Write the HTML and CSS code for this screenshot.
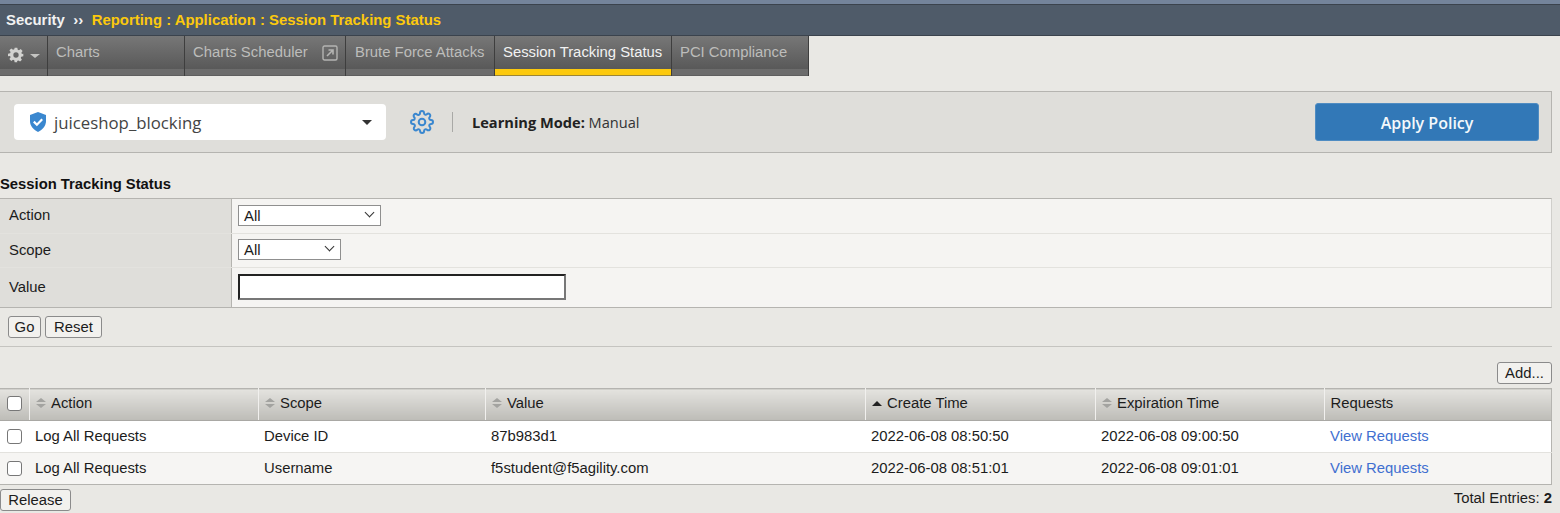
FILE: index.html
```html
<!DOCTYPE html>
<html lang="en">
<head>
  <meta charset="UTF-8" />
  <title>Session Tracking Status</title>
  <link rel="stylesheet" href="styles.css">
</head>
<body>
  <div class="top-strip"></div>
  <div class="title-bar">
    <span class="crumb-root">Security</span>
    <span class="crumb-sep">››</span>
    <span class="crumb-path">Reporting : Application : Session Tracking Status</span>
  </div>

  <div class="tabs">
    <div class="tab tab-gear">
      <svg class="gear-solid" viewBox="0 0 24 24" width="16" height="16">
        <path fill="#d2d2d0" fill-rule="evenodd" d="M10 1h4l.6 3.1 1.9.8 2.6-1.8 2.8 2.8-1.8 2.6.8 1.9L23 10v4l-3.1.6-.8 1.9 1.8 2.6-2.8 2.8-2.6-1.8-1.9.8L13.900 23h-4l-.5-3.100-1.900-.8-2.600 1.800-2.800-2.800 1.800-2.600-.8-1.900L0 14v-4l3.100-.5.8-1.900-1.800-2.600 2.800-2.800 2.600 1.800 1.900-.8zM12 8a4 4 0 1 0 0 8 4 4 0 0 0 0-8z"/>
      </svg>
      <span class="caret-small"></span>
    </div>
    <div class="tab tab-charts">Charts</div>
    <div class="tab tab-scheduler">
      <span>Charts Scheduler</span>
      <svg class="popout" viewBox="0 0 16 16" width="16" height="16">
        <rect x="1" y="1" width="14" height="14" rx="1.500" fill="none" stroke="#b4b4b2" stroke-width="1.400"/>
        <path d="M5 11l5.500-5.500M6.500 5h4.500v4.500" fill="none" stroke="#b4b4b2" stroke-width="1.600"/>
      </svg>
    </div>
    <div class="tab tab-brute">Brute Force Attacks</div>
    <div class="tab tab-session active">Session Tracking Status</div>
    <div class="tab tab-pci">PCI Compliance</div>
  </div>

  <div class="policy-bar">
    <div class="policy-select">
      <svg class="shield" viewBox="0 0 18 20" width="18" height="20">
        <path fill="#3a87cf" d="M9 0l8 3v6c0 5-3.400 8.800-8 11-4.600-2.200-8-6-8-11V3z"/>
        <path fill="none" stroke="#fff" stroke-width="2.200" d="M4.800 9.600l3.100 3.100 5.300-5.400"/>
      </svg>
      <span class="policy-name">juiceshop_blocking</span>
      <span class="caret"></span>
    </div>
    <svg class="gear-line" viewBox="0 0 24 24" width="24" height="24" fill="none" stroke="#3a87cf" stroke-width="2">
      <circle cx="12" cy="12" r="3.300"/>
      <path d="M19.400 15a1.650 1.650 0 0 0 .33 1.820l.06.06a2 2 0 1 1-2.830 2.830l-.06-.06a1.650 1.650 0 0 0-2.800 1.170V21a2 2 0 0 1-4 0v-.09a1.650 1.650 0 0 0-2.800-1.170l-.06.06a2 2 0 1 1-2.830-2.830l.06-.06a1.650 1.650 0 0 0-1.170-2.800H3a2 2 0 0 1 0-4h.09a1.650 1.650 0 0 0 1.170-2.800l-.06-.06a2 2 0 1 1 2.830-2.830l.06.06a1.650 1.650 0 0 0 1.820.33H9a1.650 1.650 0 0 0 1-1.510V3a2 2 0 0 1 4 0v.09a1.650 1.650 0 0 0 2.800 1.170l.06-.06a2 2 0 1 1 2.830 2.830l-.06.06a1.650 1.650 0 0 0 1.170 2.800H21a2 2 0 0 1 0 4h-.09a1.650 1.650 0 0 0-1.510 1z"/>
    </svg>
    <span class="divider"></span>
    <span class="learning"><b>Learning Mode:</b> Manual</span>
    <button class="apply-btn">Apply Policy</button>
  </div>

  <h2 class="section-title">Session Tracking Status</h2>

  <div class="filter">
    <div class="filter-row row-action">
      <div class="filter-label">Action</div>
      <div class="filter-field"><div class="fake-select select-action">All<span class="chevron"></span></div></div>
    </div>
    <div class="filter-row row-scope">
      <div class="filter-label">Scope</div>
      <div class="filter-field"><div class="fake-select select-scope">All<span class="chevron"></span></div></div>
    </div>
    <div class="filter-row row-value">
      <div class="filter-label">Value</div>
      <div class="filter-field"><div class="value-input"></div></div>
    </div>
  </div>
  <div class="filter-buttons">
    <button class="btn btn-go">Go</button>
    <button class="btn btn-reset">Reset</button>
  </div>

  <div class="add-row"><button class="btn btn-add">Add...</button></div>

  <table class="grid">
    <colgroup>
      <col class="col-check"><col class="col-action"><col class="col-scope"><col class="col-value">
      <col class="col-create"><col class="col-expire"><col class="col-req">
    </colgroup>
    <thead>
      <tr>
        <th><span class="check"></span></th>
        <th><span class="sort"></span>Action</th>
        <th><span class="sort"></span>Scope</th>
        <th><span class="sort"></span>Value</th>
        <th><span class="sort-up"></span>Create Time</th>
        <th><span class="sort"></span>Expiration Time</th>
        <th>Requests</th>
      </tr>
    </thead>
    <tbody>
      <tr>
        <td><span class="check"></span></td>
        <td>Log All Requests</td>
        <td>Device ID</td>
        <td>87b983d1</td>
        <td>2022-06-08 08:50:50</td>
        <td>2022-06-08 09:00:50</td>
        <td><a href="#">View Requests</a></td>
      </tr>
      <tr>
        <td><span class="check"></span></td>
        <td>Log All Requests</td>
        <td>Username</td>
        <td>f5student@f5agility.com</td>
        <td>2022-06-08 08:51:01</td>
        <td>2022-06-08 09:01:01</td>
        <td><a href="#">View Requests</a></td>
      </tr>
    </tbody>
  </table>

  <div class="footer-row">
    <button class="btn btn-release">Release</button>
    <span class="total">Total Entries: <b>2</b></span>
  </div>
</body>
</html>
```

FILE: styles.css
```css
* {
  box-sizing: border-box;
}

html, body {
  height: 513px;
  overflow: hidden;
}

body {
  margin: 0;
  background: #e9e8e4;
  color: #1c1c1c;
  font-family: "Liberation Sans", Arial, sans-serif;
  font-size: 14.85px;
}

.top-strip {
  height: 4px;
  background: #74849b;
}

.title-bar {
  height: 32px;
  padding-left: 6px;
  display: flex;
  align-items: center;
  background: #4f5b69;
  border-top: 1px solid #3b434d;
  border-bottom: 1px solid #3b434d;
  font-size: 14.9px;
  font-weight: bold;
}

.crumb-root {
  color: #f2f2f2;
}

.crumb-sep {
  margin: 0 8.5px;
  color: #f2f2f2;
}

.crumb-path {
  color: #fcc90d;
}

/* tabs */
.tabs {
  display: flex;
  width: 809px;
  height: 40px;
}

.tab {
  display: flex;
  align-items: flex-start;
  padding: 8px 8px 0;
  background: linear-gradient(#777, #595959 82%, #6c6c6c 82%, #6c6c6c 97%, #555);
  border-right: 1px solid #3e3e3e;
  color: #bdbdbb;
  white-space: nowrap;
}

.tab-gear { width: 48px; padding-top: 11px; }
.tab-charts { width: 137px; }
.tab-scheduler { width: 161px; justify-content: space-between; padding-right: 7px; }
.tab-brute { width: 149px; padding-left: 9px; }
.tab-session { width: 177px; }
.tab-pci { width: 137px; }

.tab.active {
  color: #f2f2f2;
  background: linear-gradient(#777, #595959 82%, #fcc90d 82%, #fcc90d 97%, #555);
}

.gear-solid {
  flex: none;
}

.popout {
  margin-top: 1px;
}

.caret-small {
  margin: 7px 0 0 6px;
  border: 5px solid transparent;
  border-top: 4px solid #c4c4c2;
  border-bottom: 0;
}

/* policy bar */
.policy-bar {
  width: 1552px;
  height: 62px;
  margin-top: 15px;
  padding-left: 14px;
  display: flex;
  align-items: center;
  background: #dfdeda;
  border: 1px solid #b5b4b0;
  border-left: 0;
  font-family: "Open Sans", sans-serif;
}

.policy-select {
  width: 372px;
  height: 36px;
  padding: 0 14px 0 15px;
  display: flex;
  align-items: center;
  background: #fff;
  border-radius: 4px;
}

.shield {
  margin-right: 7px;
}

.policy-name {
  flex: 1;
  color: #444;
  font-size: 16.8px;
}

.caret {
  border: 5px solid transparent;
  border-top: 5px solid #333;
  border-bottom: 0;
}

.gear-line {
  margin-left: 24px;
}

.divider {
  width: 1px;
  height: 20px;
  margin: 0 19px 0 18px;
  background: #a9a9a6;
}

.learning {
  font-size: 14.6px;
  color: #333;
}

.learning b {
  color: #222;
}

.apply-btn {
  width: 224px;
  height: 38px;
  margin-left: auto;
  margin-right: 12px;
  padding-top: 2px;
  background: #3278b7;
  border: 1px solid #4f8cc2;
  border-radius: 3px;
  color: #f4f8fb;
  font-family: "Open Sans", sans-serif;
  font-size: 16px;
  font-weight: 600;
}

.section-title {
  margin: 23px 0 5px;
  font-size: 14.8px;
  line-height: 17px;
  color: #111;
}

/* filter */
.filter {
  width: 1552px;
  border-top: 1px solid #b5b4b0;
  border-bottom: 1px solid #b5b4b0;
  border-right: 1px solid #d0cfcb;
}

.filter-row {
  display: flex;
  border-bottom: 1px solid #e3e2de;
}

.filter-row:last-child {
  border-bottom: 0;
}

.row-action { height: 35px; }
.row-scope { height: 34px; }
.row-value { height: 39px; }

.filter-label {
  width: 232px;
  padding: 0 0 2px 9px;
  display: flex;
  align-items: center;
  background: #dfdeda;
  border-right: 1px solid #b5b4b0;
}

.filter-field {
  flex: 1;
  padding: 0 0 2px 6px;
  display: flex;
  align-items: center;
  background: #f5f4f2;
}

.fake-select {
  height: 21px;
  padding-left: 5px;
  position: relative;
  background: #fff;
  border: 1px solid #8f8f8f;
  line-height: 20px;
}

.select-action { width: 143px; }
.select-scope { width: 103px; }

.chevron {
  position: absolute;
  right: 7px;
  top: 3px;
  width: 7px;
  height: 7px;
  border-right: 1px solid #333;
  border-bottom: 1px solid #333;
  transform: rotate(45deg);
}

.value-input {
  width: 328px;
  height: 26px;
  background: #fff;
  border: 2px solid #222;
  border-right-color: #777;
  border-bottom-color: #777;
}

.filter-buttons {
  width: 1552px;
  height: 39px;
  padding-left: 8px;
  display: flex;
  align-items: center;
  gap: 4px;
  border-bottom: 1px solid #c5c4c0;
}

.btn {
  height: 22px;
  padding: 0;
  background: #f2f1ee;
  border: 1px solid #8b8b8b;
  border-radius: 3px;
  color: #1c1c1c;
  font-family: "Liberation Sans", Arial, sans-serif;
  font-size: 14.85px;
}

.btn-go { width: 33px; }
.btn-reset { width: 57px; }
.btn-add { width: 55px; }
.btn-release { width: 71px; }

.add-row {
  width: 1552px;
  margin-top: 15px;
  display: flex;
  justify-content: flex-end;
}

/* grid */
.grid {
  width: 1552px;
  margin-top: 4px;
  border-collapse: collapse;
  table-layout: fixed;
  border: 1px solid #b5b4b0;
  border-left: 0;
}

.col-check { width: 29px; }
.col-action { width: 229px; }
.col-scope { width: 227px; }
.col-value { width: 380px; }
.col-create { width: 230px; }
.col-expire { width: 229px; }

.grid th {
  height: 32px;
  padding: 0 0 3px 6px;
  background: linear-gradient(#e4e3df, #bdbcb7);
  border-left: 1px solid #f1f0ee;
  border-bottom: 1px solid #a9a8a4;
  font-weight: normal;
  text-align: left;
}

.grid th:first-child {
  border-left: 0;
}

.grid td {
  height: 32px;
  padding: 0 0 1px 6px;
  background: #f6f5f3;
  border-top: 1px solid #e3e2de;
}

.grid tbody tr:first-child td {
  background: #fff;
  border-top: 0;
}

.grid a {
  color: #3f6fd0;
  text-decoration: none;
}

.check {
  display: block;
  width: 15px;
  height: 15px;
  margin-left: 1px;
  background: #fff;
  border: 1px solid #777;
  border-radius: 3px;
}

.sort, .sort-up {
  display: inline-block;
  width: 10px;
  margin-right: 5.5px;
}

.sort {
  height: 10px;
}

.sort::before, .sort::after {
  content: "";
  display: block;
  width: 0;
  border-left: 5px solid transparent;
  border-right: 5px solid transparent;
}

.sort::before {
  margin-bottom: 2px;
  border-bottom: 4px solid #a3a3a0;
}

.sort::after {
  border-top: 4px solid #a3a3a0;
}

.sort-up {
  height: 0;
  border-left: 5px solid transparent;
  border-right: 5px solid transparent;
  border-bottom: 5px solid #222;
  vertical-align: 2px;
}

.footer-row {
  width: 1552px;
  margin-top: 4px;
  display: flex;
  justify-content: space-between;
  align-items: center;
}

.total {
  margin-top: -4px;
}
```
